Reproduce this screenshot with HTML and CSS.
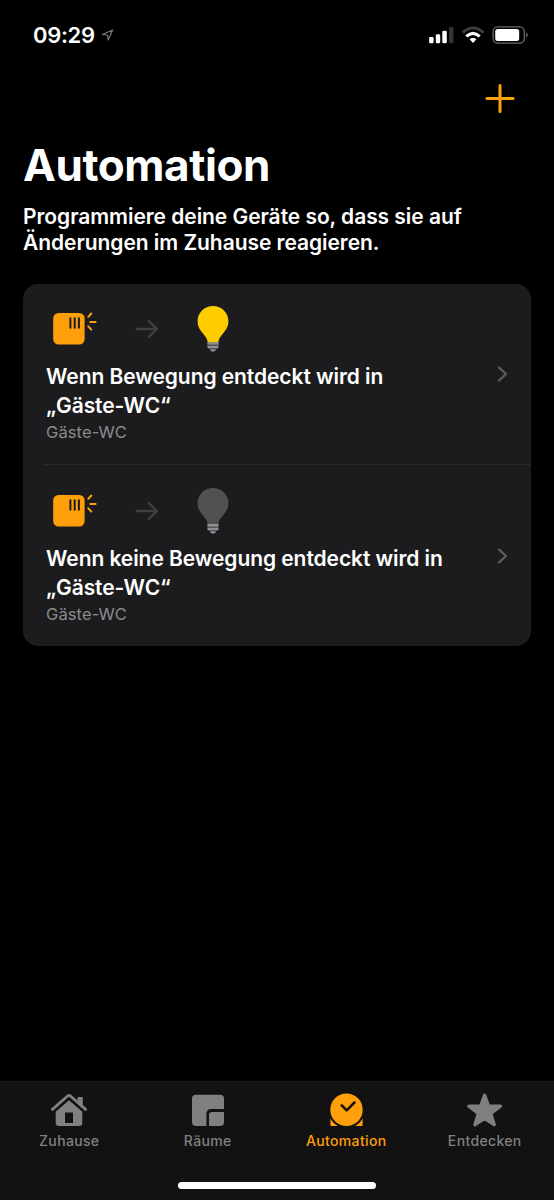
FILE: index.html
```html
<!DOCTYPE html>
<html lang="de">
<head>
<meta charset="utf-8">
<title>Automation</title>
<link rel="stylesheet" href="styles.css">
</head>
<body>
<svg class="defs" width="0" height="0" aria-hidden="true">
  <symbol id="sensor" viewBox="0 0 44 34">
    <path fill="#ff9f0a" fill-rule="evenodd" d="M6.300 1H26.300a5.300 5.300 0 0 1 5.300 5.300V27.200a5.300 5.300 0 0 1-5.300 5.300H5.500A5.300 5.300 0 0 1 .2 27.200V6.300A5.300 5.300 0 0 1 5.500 1z"/>
    <path stroke="#1c1c1e" stroke-width="2" stroke-linecap="round" d="M17.400 6.200v9.600M21.700 6.200v9.600M25.900 6.200v9.600"/>
    <path stroke="#ff9f0a" stroke-width="2" stroke-linecap="round" d="M35.300 4.800l3-3.300M37.300 9.900h5.300M35.300 14.300l3 3.300"/>
  </symbol>
  <symbol id="arrow" viewBox="0 0 24 20">
    <path fill="none" stroke="#3e3e40" stroke-width="2.500" stroke-linecap="round" stroke-linejoin="round" d="M1.800 10h20M13.800 2.200l8 7.800-8 7.800"/>
  </symbol>
  <symbol id="bulb" viewBox="0 0 32 46">
    <path fill="currentColor" d="M16 0C7.300 0 .6 6.700.6 15.200c0 5.400 2.500 8.600 5.200 12.100 2.500 3.200 4.600 5.400 4.800 8.700h10.800c.2-3.300 2.300-5.500 4.800-8.700 2.700-3.500 5.200-6.700 5.200-12.100C31.400 6.700 24.700 0 16 0z"/>
    <path fill="#8e8e93" d="M10.400 36h11.200v2.700H10.400zM10.400 39.600h11.200v1.300a1.600 1.600 0 0 1-1.600 1.500h-8a1.600 1.600 0 0 1-1.600-1.500zM12.800 43.200h6.400c-.4 1.600-1.700 2.500-3.200 2.500s-2.800-.9-3.200-2.500z"/>
  </symbol>
  <symbol id="chevron" viewBox="0 0 12 18">
    <path fill="none" stroke="#5c5c5f" stroke-width="2.300" stroke-linecap="round" stroke-linejoin="round" d="M2.100 2.600L9 9l-6.900 6.400"/>
  </symbol>
</svg>
<div class="screen">
  <header class="status">
    <div class="clock">
      <span class="time">09:29</span>
      <svg class="location" width="14" height="14" viewBox="0 0 14 14"><path fill="none" stroke="#77777a" stroke-width="1.200" stroke-linejoin="round" d="M11.600 2L1.500 6.500l5 .5.700 5z"/></svg>
    </div>
    <div class="indicators">
      <svg width="26" height="18" viewBox="0 0 26 18"><g fill="#fff"><rect x="1.100" y="11" width="4.500" height="6.200" rx="1.300"/><rect x="7.800" y="8.300" width="4.400" height="8.900" rx="1.300"/><rect x="14.300" y="4.800" width="4.500" height="12.400" rx="1.300"/></g><rect x="21" y="1" width="4.500" height="16.200" rx="1.300" fill="#333335"/></svg>
      <svg width="24" height="18" viewBox="0 0 24 18"><path fill="none" stroke="#3b3b3d" stroke-width="3" d="M1.600 6.600Q12-2.700 22.400 6.600"/><path fill="none" stroke="#fff" stroke-width="3" d="M5.300 10.400Q12 4.300 18.700 10.400"/><path fill="#fff" d="M8.600 13.300Q12 10.600 15.400 13.300L12 17z"/></svg>
      <svg width="36" height="18" viewBox="0 0 36 18"><rect x="1.100" y=".9" width="31.200" height="16.200" rx="4.600" fill="none" stroke="#69696b" stroke-width="1.300"/><rect x="3.200" y="3" width="24" height="12" rx="2.500" fill="#fff"/><path fill="#69696b" d="M34.100 6.500c2.200.8 2.200 4.200 0 5z"/></svg>
    </div>
  </header>
  <div class="toolbar">
    <svg width="30" height="30" viewBox="0 0 30 30"><path stroke="#ff9f0a" stroke-width="3" stroke-linecap="round" d="M15 1.600v26M1.900 14.600h26.200"/></svg>
  </div>
  <main class="content">
    <h1 class="title">Automation</h1>
    <p class="intro">Programmiere deine Geräte so, dass sie auf<br>Änderungen im Zuhause reagieren.</p>
    <section class="card">
      <article class="rule">
        <div class="flow"><svg class="sensor"><use href="#sensor"/></svg><svg class="arrow"><use href="#arrow"/></svg><svg class="bulb lit"><use href="#bulb"/></svg></div>
        <div class="detail"><h2 class="name">Wenn Bewegung entdeckt wird in<br>„Gäste-WC“</h2><svg class="chevron"><use href="#chevron"/></svg></div>
        <p class="room">Gäste-WC</p>
      </article>
      <article class="rule">
        <div class="flow"><svg class="sensor"><use href="#sensor"/></svg><svg class="arrow"><use href="#arrow"/></svg><svg class="bulb"><use href="#bulb"/></svg></div>
        <div class="detail"><h2 class="name">Wenn keine Bewegung entdeckt wird in<br>„Gäste-WC“</h2><svg class="chevron"><use href="#chevron"/></svg></div>
        <p class="room">Gäste-WC</p>
      </article>
    </section>
  </main>
  <footer class="bottom">
    <nav class="tabs">
      <div class="tab"><svg width="38" height="36" viewBox="0 0 38 36"><path fill="none" stroke="currentColor" stroke-width="2.800" stroke-linecap="round" stroke-linejoin="round" d="M2.400 17.400L17.300 4.200Q19 2.700 20.700 4.200L35.600 17.400"/><path fill="currentColor" d="M28.700 4.900h2.900q1.200 0 1.200 1.200v8.300l-5.300-4.700V6.100q0-1.200 1.200-1.200z"/><path fill="currentColor" fill-rule="evenodd" d="M19 8.200L32.300 19.700V31q0 3-3 3H8.700q-3 0-3-3V19.700zM15 20.400v10.600h8V20.400z"/></svg><span>Zuhause</span></div>
      <div class="tab"><svg width="38" height="36" viewBox="0 0 38 36"><path fill="currentColor" d="M7 2.800h24q4 0 4 4V17H22.500q-5.100 0-5.100 5.100V34H7q-4 0-4-4V6.800q0-4 4-4z"/><path fill="currentColor" d="M23 20h12v10q0 4-4 4H20V23q0-3 3-3z"/></svg><span>Räume</span></div>
      <div class="tab active"><svg width="38" height="36" viewBox="0 0 38 36"><path fill="currentColor" d="M3.400 26.300L11.500 34H4.500q-1.100 0-1.100-1.100zM35.600 26.300L27.500 34h7q1.100 0 1.100-1.100z"/><circle cx="19.500" cy="17.700" r="17.200" fill="none" stroke="#121212" stroke-width="2.200"/><circle cx="19.500" cy="17.700" r="16.200" fill="currentColor"/><path fill="none" stroke="#121212" stroke-width="2.600" stroke-linecap="round" stroke-linejoin="round" d="M14.700 13.300l5 5L27.500 10.500"/></svg><span>Automation</span></div>
      <div class="tab"><svg width="38" height="36" viewBox="0 0 38 36"><path fill="currentColor" stroke="currentColor" stroke-width="3.400" stroke-linejoin="round" d="M18.600 3.300l3.800 10.600 12 .3-9.600 7.300 3.400 11.200-9.600-6.400-9.600 6.400 3.400-11.200-9.600-7.300 12-.3z"/></svg><span>Entdecken</span></div>
    </nav>
    <div class="home-indicator"></div>
  </footer>
</div>
</body>
</html>
```
FILE: styles.css
```css
* { box-sizing: border-box; }
body { margin: 0; background: #000; }
h1, h2, p { margin: 0; }
svg { display: block; flex: none; }
.defs { position: absolute; }
.screen {
  width: 554px;
  height: 1200px;
  display: flex;
  flex-direction: column;
  background: #000;
  color: #fff;
  font-family: Inter, "Liberation Sans", sans-serif;
}
.status {
  height: 70px;
  padding: 0 26px 0 33px;
  display: flex;
  justify-content: space-between;
}
.clock { display: flex; gap: 6px; padding-top: 22px; }
.time { width: 62px; font-size: 22px; line-height: 27px; font-weight: 600; letter-spacing: -0.35px; white-space: nowrap; }
.location { margin-top: 6px; }
.indicators { display: flex; gap: 7px; padding-top: 26px; }
.toolbar { height: 70px; padding: 14px 39px 0 0; display: flex; justify-content: flex-end; }
.content { flex: 1; padding: 0 23px; }
.title { font-size: 44px; line-height: 50px; font-weight: 700; letter-spacing: -0.4px; white-space: nowrap; }
.intro { margin-top: 14px; font-size: 21px; line-height: 26px; font-weight: 600; letter-spacing: -0.05px; white-space: nowrap; }
.card { margin-top: 28px; border-radius: 15px; background: #1c1c1e; overflow: hidden; }
.rule { height: 180px; padding: 22px 23px 0; }
.rule + .rule {
  height: 182px;
  padding-top: 24px;
  background: linear-gradient(#2b2b2d, #2b2b2d) 20px 0 / 100% 1px no-repeat;
}
.flow { display: flex; align-items: center; height: 46px; padding-left: 7px; }
.sensor { width: 44px; height: 34px; }
.arrow { width: 24px; height: 20px; margin-left: 38px; }
.bulb { width: 32px; height: 46px; margin-left: 38px; color: #515151; }
.lit { color: #ffcc00; }
.detail { display: flex; justify-content: space-between; padding-top: 11px; }
.name { font-size: 21px; line-height: 28.5px; font-weight: 600; letter-spacing: -0.07px; white-space: nowrap; }
.chevron { width: 12px; height: 18px; margin: 2px -1px 0 0; }
.room { margin-top: 1px; font-size: 16.5px; line-height: 22px; letter-spacing: 0.1px; color: #8a8a8e; }
.bottom { height: 119px; border-top: 1px solid #1b1b1b; background: #121212; }
.tabs { display: grid; grid-template-columns: repeat(4, 1fr); padding-top: 10px; }
.tab { display: flex; flex-direction: column; align-items: center; color: #808080; }
.tab span { margin-top: 4px; font-size: 14px; line-height: 18px; font-weight: 500; letter-spacing: 0.35px; }
.tab.active { color: #ff9f0a; }
.home-indicator { width: 198px; height: 7px; margin: 32px auto 0; border-radius: 4px; background: #fff; }
```
